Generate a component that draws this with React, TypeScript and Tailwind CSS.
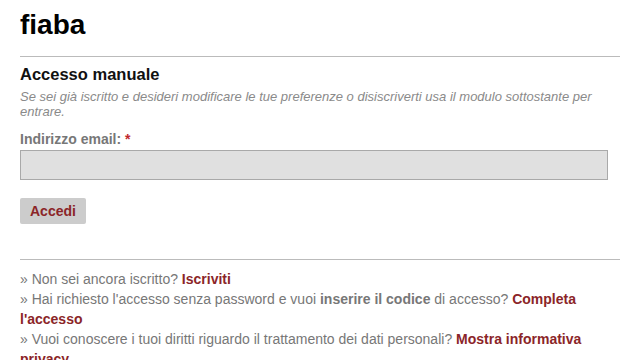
export default function App() {
  return (
    <div className="w-[640px] h-[360px] overflow-hidden bg-white px-5 font-['Liberation_Sans',Arial,sans-serif]">
      <h1 className="pt-[8px] text-[28px] leading-[34px] font-bold text-black">fiaba</h1>
      <div className="mt-[14px] border-t border-[#bbbbbb]" />
      <h2 className="mt-[7px] text-[16.5px] leading-[20px] font-bold text-[#111]">Accesso manuale</h2>
      <p className="mt-[5px] w-[580px] text-[13px] leading-[15px] italic text-[#8a8a8a]">
        Se sei già iscritto e desideri modificare le tue preferenze o disiscriverti usa il modulo sottostante per entrare.
      </p>
      <div className="mt-[12px] text-[14px] leading-[16px] font-bold text-[#777]">
        Indirizzo email: <span className="text-[#c0272d]">*</span>
      </div>
      <div className="mt-[3px] h-[30px] w-[588px] border border-[#a9a9a9] bg-[#e0e0e0]" />
      <button className="mt-[18px] h-[26px] px-[10px] rounded-[2px] bg-[#cccccc] text-[14px] font-bold text-[#8b2528] leading-[26px]">
        Accedi
      </button>
      <div className="mt-[35px] border-t border-[#bbbbbb]" />
      <div className="mt-[9px] text-[14px] leading-[20px] text-[#777]">
        <div>» Non sei ancora iscritto? <span className="font-bold text-[#8b2528]">Iscriviti</span></div>
        <div>
          » Hai richiesto l'accesso senza password e vuoi <span className="font-bold">inserire il codice</span> di accesso?{" "}
          <span className="font-bold text-[#8b2528]">Completa l'accesso</span>
        </div>
        <div>
          » Vuoi conoscere i tuoi diritti riguardo il trattamento dei dati personali?{" "}
          <span className="font-bold text-[#8b2528]">Mostra informativa privacy</span>
        </div>
      </div>
    </div>
  );
}
